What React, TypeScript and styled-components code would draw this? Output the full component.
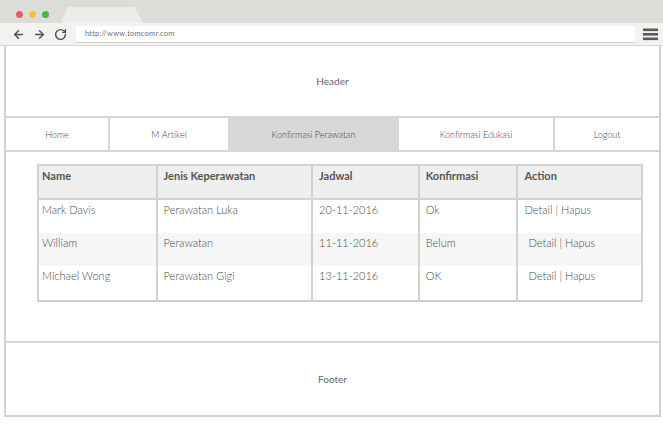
import * as React from "react";
import styled, { createGlobalStyle } from "styled-components";
import { ArrowLeft, ArrowRight, RotateCw } from "lucide-react";

const GlobalStyle = createGlobalStyle`
  body {
    margin: 0;
    background: #ffffff;
    font-family: Lato, "Open Sans", sans-serif;
    color: #555;
  }
`;

const Window = styled.div`
  width: 657px;
  margin-left: 4px;
  display: flex;
  flex-direction: column;
`;

const TabBar = styled.div`
  height: 23px;
  margin-left: -4px;
  margin-right: -3px;
  background: #dcddd9;
  display: flex;
  align-items: flex-end;
  padding-left: 16px;
  gap: 6px;
`;

const Lights = styled.div`
  display: flex;
  gap: 6px;
  align-self: center;
  margin-top: 6px;
`;

const Light = styled.span<{ $color: string }>`
  width: 7px;
  height: 7px;
  border-radius: 50%;
  background: ${(p) => p.$color};
`;

const Tab = styled.div`
  width: 82px;
  height: 16px;
  margin-left: 6px;
  background: #ececea;
  clip-path: polygon(8% 0, 90% 0, 100% 100%, 0 100%);
`;

const Toolbar = styled.div`
  height: 22px;
  margin-left: -4px;
  margin-right: -3px;
  background: #f2f2f0;
  border-bottom: 1px solid #d6d6d4;
  display: flex;
  align-items: center;
  padding: 0 6px 0 12px;
  gap: 8px;
  color: #505050;
`;

const Address = styled.div`
  flex: 1;
  height: 16px;
  margin-left: 1px;
  background: #fff;
  border-bottom: 1px solid #cfcfcf;
  font-size: 7.5px;
  line-height: 16px;
  padding-left: 9px;
  color: #707070;
  letter-spacing: 0.2px;
`;

const Content = styled.div`
  border-left: 2px solid #d2d2d2;
  border-right: 2px solid #d2d2d2;
  border-bottom: 2px solid #d2d2d2;
  display: flex;
  flex-direction: column;
`;

const Band = styled.div<{ $h: number; $last?: boolean }>`
  height: ${(p) => p.$h}px;
  display: flex;
  align-items: center;
  justify-content: center;
  font-size: 10px;
  color: #666;
  border-bottom: ${(p) => (p.$last ? "none" : "2px solid #d6d6d6")};
`;

const Nav = styled.nav`
  height: 32px;
  display: flex;
  border-bottom: 2px solid #d6d6d6;
`;

const NavItem = styled.div<{ $w: number; $active?: boolean }>`
  width: ${(p) => p.$w}px;
  flex: ${(p) => (p.$w ? "none" : "1")};
  display: flex;
  align-items: center;
  justify-content: center;
  font-size: 9px;
  font-weight: 300;
  color: #444;
  background: ${(p) => (p.$active ? "#d8d8d8" : "#fff")};
  & + & {
    border-left: 2px solid #d6d6d6;
  }
`;

const Main = styled.main`
  height: 177px;
  padding: 12px 0 0 31px;
  border-bottom: 2px solid #d6d6d6;
`;

const Table = styled.table`
  width: 606px;
  border-collapse: collapse;
  border: 2px solid #cdcdcd;
  font-size: 11px;
  color: #555;

  th:first-child,
  td:first-child {
    padding-left: 3px;
  }
`;

const Th = styled.th<{ $w: number }>`
  width: ${(p) => p.$w}px;
  height: 34px;
  box-sizing: border-box;
  background: #efefef;
  border: 2px solid #d2d2d2;
  text-align: left;
  vertical-align: top;
  padding: 3px 6px;
  font-weight: 700;
  color: #555;
  line-height: 14px;
`;

const Tr = styled.tr<{ $shade?: boolean }>`
  background: ${(p) => (p.$shade ? "#f6f6f6" : "#fff")};
`;

const Td = styled.td<{ $indent?: boolean; $h: number }>`
  height: ${(p) => p.$h}px;
  border-left: 2px solid #d2d2d2;
  border-right: 2px solid #d2d2d2;
  vertical-align: top;
  padding: 3px 5px 0 ${(p) => (p.$indent ? 10 : 6)}px;
  line-height: 14px;
  font-weight: 300;
  color: #4a4a4a;
  box-sizing: border-box;
`;

const MenuIcon = () => (
  <svg width="15" height="13" viewBox="0 0 15 13">
    <rect x="0" y="0.5" width="15" height="2.6" fill="#5a5a5a" />
    <rect x="0" y="5" width="15" height="2.6" fill="#5a5a5a" />
    <rect x="0" y="9.5" width="15" height="2.6" fill="#5a5a5a" />
  </svg>
);

const rows = [
  { name: "Mark Davis", jenis: "Perawatan Luka", jadwal: "20-11-2016", konf: "Ok", h: 34 },
  { name: "William", jenis: "Perawatan", jadwal: "11-11-2016", konf: "Belum", h: 33, shade: true, indent: true },
  { name: "Michael Wong", jenis: "Perawatan Gigi", jadwal: "13-11-2016", konf: "OK", h: 35, indent: true },
];

export default function App() {
  return (
    <Window>
      <GlobalStyle />
      <TabBar>
        <Lights>
          <Light $color="#e45d62" />
          <Light $color="#f2c13e" />
          <Light $color="#3cba4b" />
        </Lights>
        <Tab />
      </TabBar>
      <Toolbar>
        <ArrowLeft size={13} strokeWidth={2.6} />
        <ArrowRight size={13} strokeWidth={2.6} />
        <RotateCw size={13} strokeWidth={2.6} />
        <Address>http://www.tomcomr.com</Address>
        <MenuIcon />
      </Toolbar>
      <Content>
        <Band $h={70}>Header</Band>
        <Nav>
          <NavItem $w={102}>Home</NavItem>
          <NavItem $w={118}>M Artikel</NavItem>
          <NavItem $w={167} $active>Konfirmasi Perawatan</NavItem>
          <NavItem $w={154}>Konfirmasi Edukasi</NavItem>
          <NavItem $w={0}>Logout</NavItem>
        </Nav>
        <Main>
          <Table>
            <thead>
              <tr>
                <Th $w={119}>Name</Th>
                <Th $w={156}>Jenis Keperawatan</Th>
                <Th $w={107}>Jadwal</Th>
                <Th $w={99}>Konfirmasi</Th>
                <Th $w={125}>Action</Th>
              </tr>
            </thead>
            <tbody>
              {rows.map((r) => (
                <Tr key={r.name} $shade={r.shade}>
                  <Td $h={r.h}>{r.name}</Td>
                  <Td $h={r.h}>{r.jenis}</Td>
                  <Td $h={r.h}>{r.jadwal}</Td>
                  <Td $h={r.h}>{r.konf}</Td>
                  <Td $h={r.h} $indent={r.indent}>Detail | Hapus</Td>
                </Tr>
              ))}
            </tbody>
          </Table>
        </Main>
        <Band $h={72} $last>Footer</Band>
      </Content>
    </Window>
  );
}
